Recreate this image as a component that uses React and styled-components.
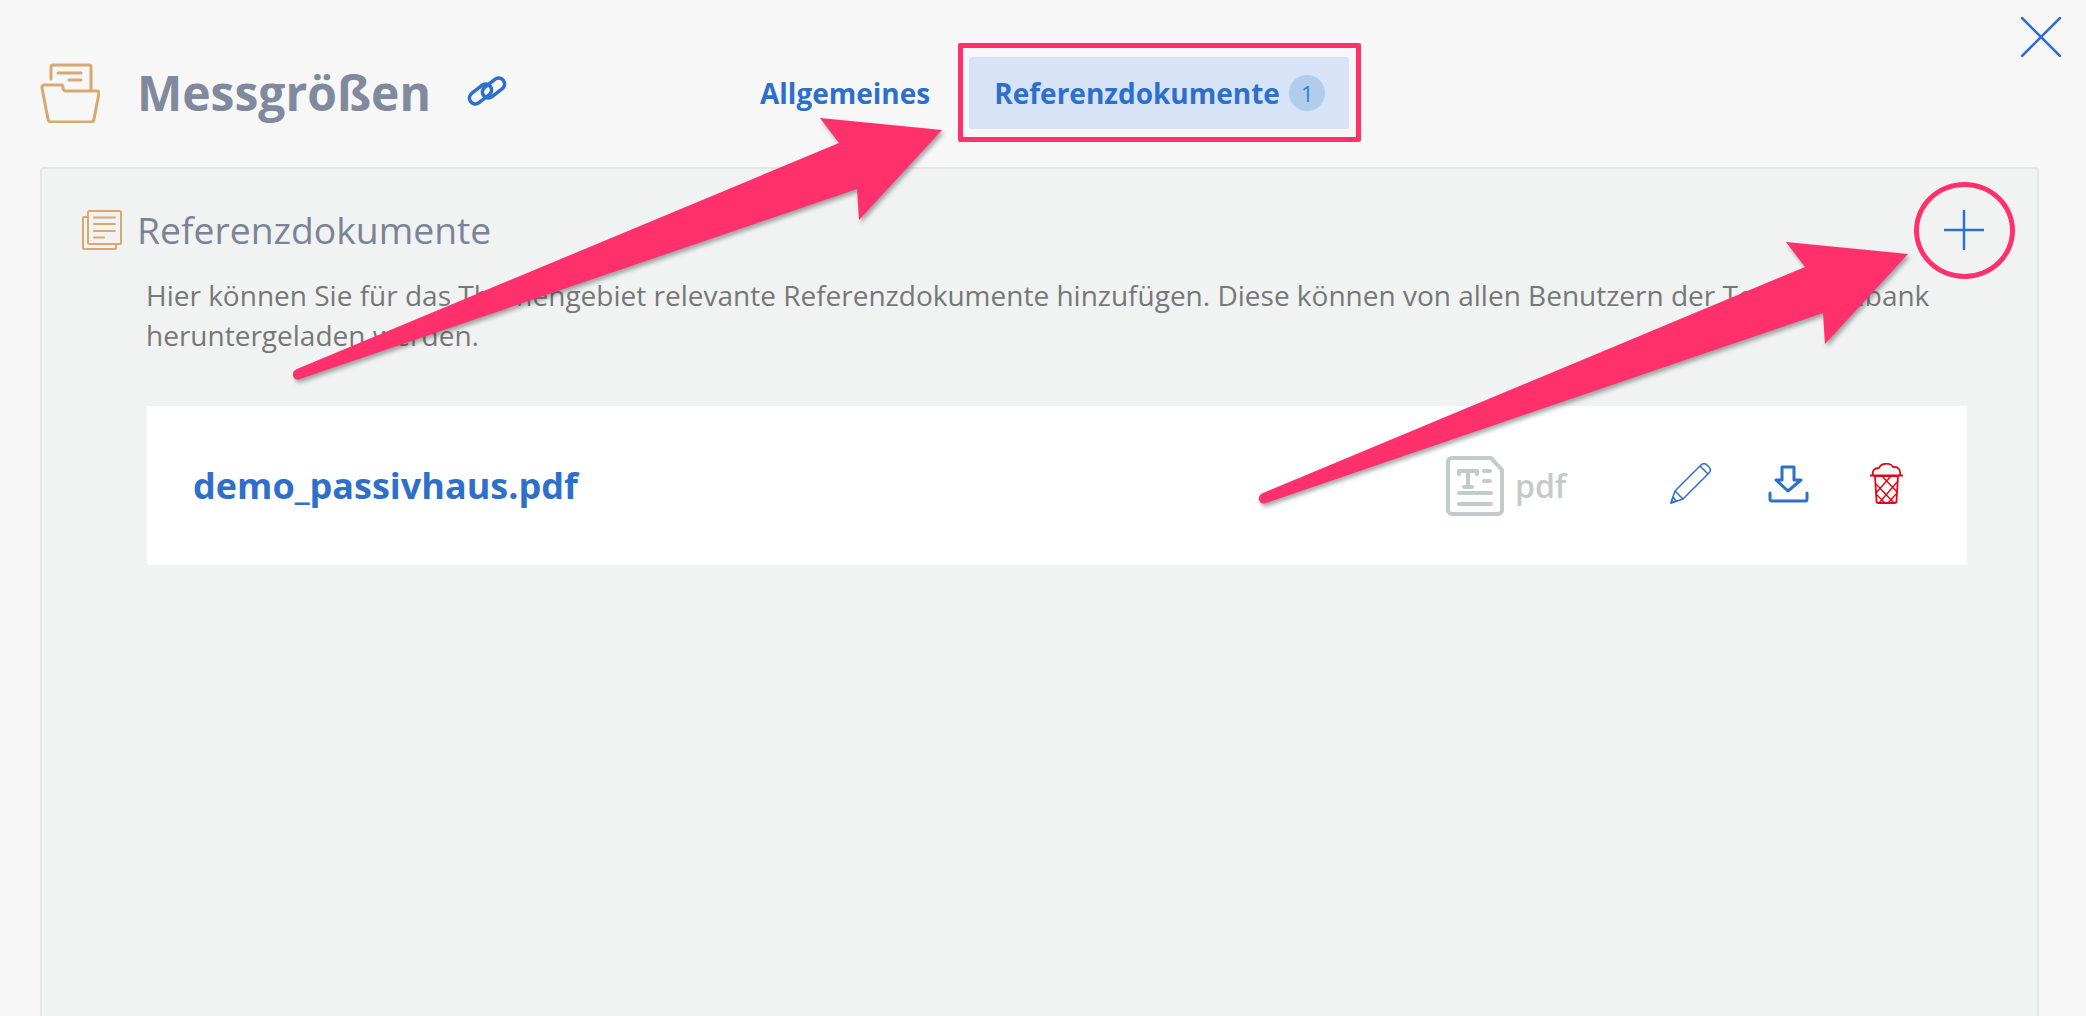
import React from "react"
import styled, { createGlobalStyle } from "styled-components"

const blue = "#2d6fca"
const pink = "#ff306b"
const tan = "#d7a970"

const GlobalStyle = createGlobalStyle`
  html, body {
    margin: 0;
    padding: 0;
    background: #f7f7f7;
  }
  * {
    box-sizing: border-box;
  }
`

const Page = styled.div`
  position: relative;
  width: 2086px;
  height: 1016px;
  overflow: hidden;
  background: #f7f7f7;
  font-family: "Open Sans", "Liberation Sans", sans-serif;
`

const Header = styled.header`
  display: grid;
  grid-template-columns: 720px 1fr;
  align-items: center;
  height: 167px;
  padding: 18px 0 0 40px;
`

const TitleGroup = styled.div`
  display: flex;
  align-items: center;
`

const Title = styled.h1`
  margin: 0 36px 0 37px;
  font-size: 48px;
  line-height: 60px;
  font-weight: 700;
  color: #818a9c;
`

const Nav = styled.nav`
  display: flex;
  align-items: center;
`

const NavLink = styled.a`
  margin-right: 28px;
  font-size: 28px;
  font-weight: 700;
  color: ${blue};
`

const Highlight = styled.div`
  border: 5px solid ${pink};
  border-radius: 2px;
  padding: 9px 7px 8px 6px;
`

const ActiveTab = styled.a`
  display: flex;
  align-items: center;
  justify-content: space-between;
  width: 380px;
  height: 72px;
  padding: 0 24px 0 25px;
  border-radius: 2px;
  background: #d7e4f7;
  font-size: 28px;
  font-weight: 700;
  color: ${blue};
`

const Badge = styled.span`
  display: flex;
  align-items: center;
  justify-content: center;
  width: 36px;
  height: 36px;
  border-radius: 50%;
  background: #b1cdee;
  font-size: 22px;
  font-weight: 400;
  color: #2b84c9;
`

const CloseButton = styled.button`
  position: absolute;
  top: 17px;
  left: 2021px;
  width: 40px;
  height: 40px;
  padding: 0;
  border: 0;
  background: none;
  line-height: 0;
`

const Panel = styled.section`
  height: 900px;
  width: 1999px;
  margin-left: 40px;
  padding: 41px 53px 0 40px;
  border: 2px solid #e3e6e5;
  border-radius: 4px;
  background: #f1f3f2;
`

const SectionHeader = styled.div`
  display: flex;
  align-items: center;
  height: 40px;
`

const SectionTitle = styled.h2`
  flex: 1;
  margin: 0 0 0 15px;
  font-size: 37.3px;
  line-height: 40px;
  font-weight: 400;
  color: #7b8496;
`

const AddButton = styled.button`
  position: relative;
  width: 40px;
  height: 40px;
  padding: 0;
  border: 0;
  background: none;
  line-height: 0;
`

const Ring = styled.span`
  position: absolute;
  top: -28px;
  left: -30px;
  width: 101px;
  height: 97px;
  border: 5.5px solid ${pink};
  border-radius: 50%;
`

const Description = styled.p`
  margin: 25px 17px 0 64px;
  font-size: 28px;
  line-height: 40px;
  color: #757876;
`

const DocumentRow = styled.div`
  display: flex;
  align-items: center;
  height: 159px;
  margin: 51px 17px 0 65px;
  padding: 0 64px 0 46px;
  background: #fff;
`

const FileName = styled.a`
  flex: 1;
  font-size: 36px;
  font-weight: 700;
  color: ${blue};
`

const FileType = styled.div`
  display: flex;
  align-items: center;
  gap: 11px;
  width: 224px;
  font-size: 32px;
  font-weight: 600;
  color: #c3cbca;
`

const Actions = styled.div`
  display: flex;
  align-items: center;
  margin-bottom: 4px;
`

const ActionButton = styled.button`
  width: ${(p) => p.$width}px;
  padding: 0;
  border: 0;
  background: none;
  line-height: 0;
  text-align: left;
`

const Annotations = styled.svg`
  position: absolute;
  top: 0;
  left: 0;
  pointer-events: none;
  filter: drop-shadow(2px 3px 2px rgba(60, 60, 60, 0.45));
`

const FolderIcon = () => (
  <svg width="60" height="60" viewBox="0 0 60 60" fill="none" stroke={tan} strokeWidth="3" strokeLinejoin="round" strokeLinecap="round">
    <path d="M11 16V4a2 2 0 0 1 2-2h36a2 2 0 0 1 2 2v23" />
    <path d="M18 10h23M29 17h12" />
    <path d="M4 22h17a2 2 0 0 1 2 2v1a3 3 0 0 0 3 3h31a2 2 0 0 1 2 2l-5 26a3 3 0 0 1-3 3H11a3 3 0 0 1-3-3L2 25a2.500 2.500 0 0 1 2-3z" />
  </svg>
)

const LinkIcon = () => (
  <svg width="40" height="32" viewBox="0 0 40 32" fill="none" stroke={blue} strokeWidth="3.500" style={{ marginTop: -3 }}>
    <rect x="1" y="13" width="25" height="12" rx="6" transform="rotate(-38 13.500 19)" />
    <rect x="14" y="7" width="25" height="12" rx="6" transform="rotate(-38 26.500 13)" />
  </svg>
)

const PagesIcon = () => (
  <svg width="40" height="40" viewBox="0 0 40 40" fill="none" stroke={tan} strokeWidth="2" strokeLinecap="round" strokeLinejoin="round">
    <path d="M5 7H2a1 1 0 0 0-1 1v30a1 1 0 0 0 1 1h31a1 1 0 0 0 1-1v-4" />
    <rect x="6" y="1" width="33" height="33" rx="1.500" />
    <path d="M12 7.500h21M12 14h21M12 21h21M12 27.500h10" />
  </svg>
)

const CloseIcon = () => (
  <svg width="40" height="40" viewBox="0 0 40 40" stroke={blue} strokeWidth="2.500" strokeLinecap="round">
    <path d="M1 1l38 38M39 1L1 39" />
  </svg>
)

const PlusIcon = () => (
  <svg width="40" height="40" viewBox="0 0 40 40" stroke={blue} strokeWidth="2.500">
    <path d="M20 0v40M0 20h40" />
  </svg>
)

const FileIcon = () => (
  <svg width="58" height="60" viewBox="0 0 58 60" fill="none" stroke="#c3cbca" strokeWidth="4" strokeLinecap="round" strokeLinejoin="round">
    <path d="M6 2h39l11 12v40a4 4 0 0 1-4 4H6a4 4 0 0 1-4-4V6a4 4 0 0 1 4-4z" />
    <path d="M13 18v-3h18v3M22 15v16M18 31h8M38 15h6M38 25h6M13 37h32M13 48h32" />
  </svg>
)

const PencilIcon = () => (
  <svg width="41" height="41" viewBox="0 0 41 41" fill="none" stroke={blue} strokeWidth="1.500" strokeLinejoin="round">
    <path d="M1 40l4-12L31 2a4 4 0 0 1 6 0l2 2a4 4 0 0 1 0 6L13 36z" />
    <path d="M5 28l8 8M30 3l8 8M1 40l5-2-3-4z" />
  </svg>
)

const DownloadIcon = () => (
  <svg width="41" height="38" viewBox="0 0 41 38" fill="none" stroke={blue} strokeWidth="3" strokeLinejoin="round" strokeLinecap="round">
    <path d="M14 2h12v13h7L20 26 8 15h6z" />
    <path d="M2 28v6a2 2 0 0 0 2 2h33a2 2 0 0 0 2-2v-6" />
  </svg>
)

const TrashIcon = () => (
  <svg width="33" height="41" viewBox="0 0 33 41" fill="none" stroke="#e30613" strokeWidth="1.800" strokeLinejoin="round">
    <path d="M0 12.500h33" strokeWidth="2.200" />
    <path d="M3 12c-1-4 1-7 6-7 2-5 11-6 14-1 5-1 8 3 7 8" />
    <path d="M5 13l1.500 25a2 2 0 0 0 2 2h16a2 2 0 0 0 2-2L28 13z" />
    <path d="M6 21l18 19M12 13l16 17M21 13L6 30M28 18L9 40M6 31l9 9M26 31l-8 9" strokeWidth="1.400" />
  </svg>
)

const Arrow = ({ x = 0, y = 0 }) => (
  <g transform={`translate(${x} ${y})`}>
    <path
      d="M820 118L942 130 859 220 857 189 300 379Q295 381 293 376Q292 371 297 369L839 143z"
      fill={pink}
    />
  </g>
)

export default function App() {
  return (
    <Page>
      <GlobalStyle />
      <Header>
        <TitleGroup>
          <FolderIcon />
          <Title>Messgrößen</Title>
          <LinkIcon />
        </TitleGroup>
        <Nav>
          <NavLink>Allgemeines</NavLink>
          <Highlight>
            <ActiveTab>
              Referenzdokumente
              <Badge>1</Badge>
            </ActiveTab>
          </Highlight>
        </Nav>
      </Header>
      <CloseButton>
        <CloseIcon />
      </CloseButton>
      <Panel>
        <SectionHeader>
          <PagesIcon />
          <SectionTitle>Referenzdokumente</SectionTitle>
          <AddButton>
            <PlusIcon />
            <Ring />
          </AddButton>
        </SectionHeader>
        <Description>
          Hier können Sie für das Themengebiet relevante Referenzdokumente hinzufügen. Diese können von allen Benutzern der Test-Datenbank heruntergeladen werden.
        </Description>
        <DocumentRow>
          <FileName>demo_passivhaus.pdf</FileName>
          <FileType>
            <FileIcon />
            pdf
          </FileType>
          <Actions>
            <ActionButton $width={98}><PencilIcon /></ActionButton>
            <ActionButton $width={102}><DownloadIcon /></ActionButton>
            <ActionButton $width={33}><TrashIcon /></ActionButton>
          </Actions>
        </DocumentRow>
      </Panel>
      <Annotations width="2086" height="1016" viewBox="0 0 2086 1016">
        <Arrow />
        <Arrow x={966} y={124} />
      </Annotations>
    </Page>
  )
}
